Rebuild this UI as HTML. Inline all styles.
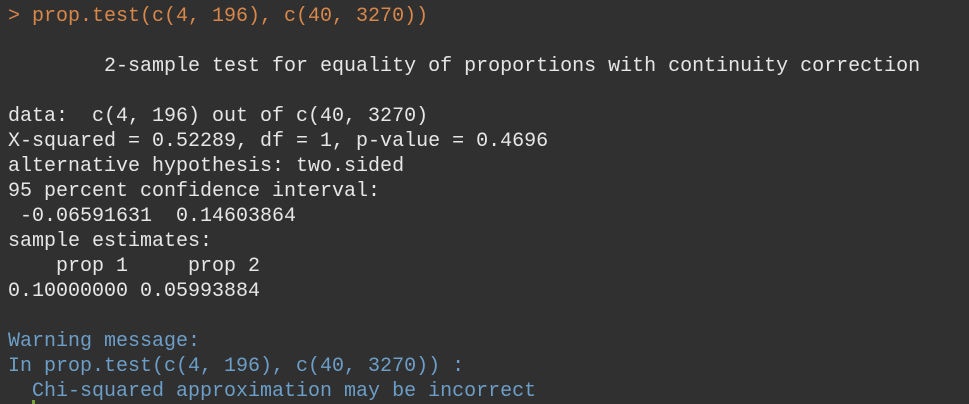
<!DOCTYPE html>
<html><head><meta charset="utf-8"><style>
html,body{margin:0;padding:0;background:#303030;width:969px;height:404px;overflow:hidden}
pre{margin:0;position:absolute;left:8px;top:4px;font-family:"Liberation Mono","DejaVu Sans Mono",monospace;font-size:20px;line-height:25px;color:#e6e6e6;white-space:pre}
.o{color:#d7874a}.b{color:#6c9ec8}
.cur{position:absolute;left:32px;top:400px;width:3px;height:4px;background:#7aa23a}
</style></head><body>
<pre><span class="o">&gt; prop.test(c(4, 196), c(40, 3270))</span>

        2-sample test for equality of proportions with continuity correction

data:  c(4, 196) out of c(40, 3270)
X-squared = 0.52289, df = 1, p-value = 0.4696
alternative hypothesis: two.sided
95 percent confidence interval:
 -0.06591631  0.14603864
sample estimates:
    prop 1     prop 2 
0.10000000 0.05993884 

<span class="b">Warning message:
In prop.test(c(4, 196), c(40, 3270)) :
  Chi-squared approximation may be incorrect</span></pre>
<div class="cur"></div>
</body></html>
